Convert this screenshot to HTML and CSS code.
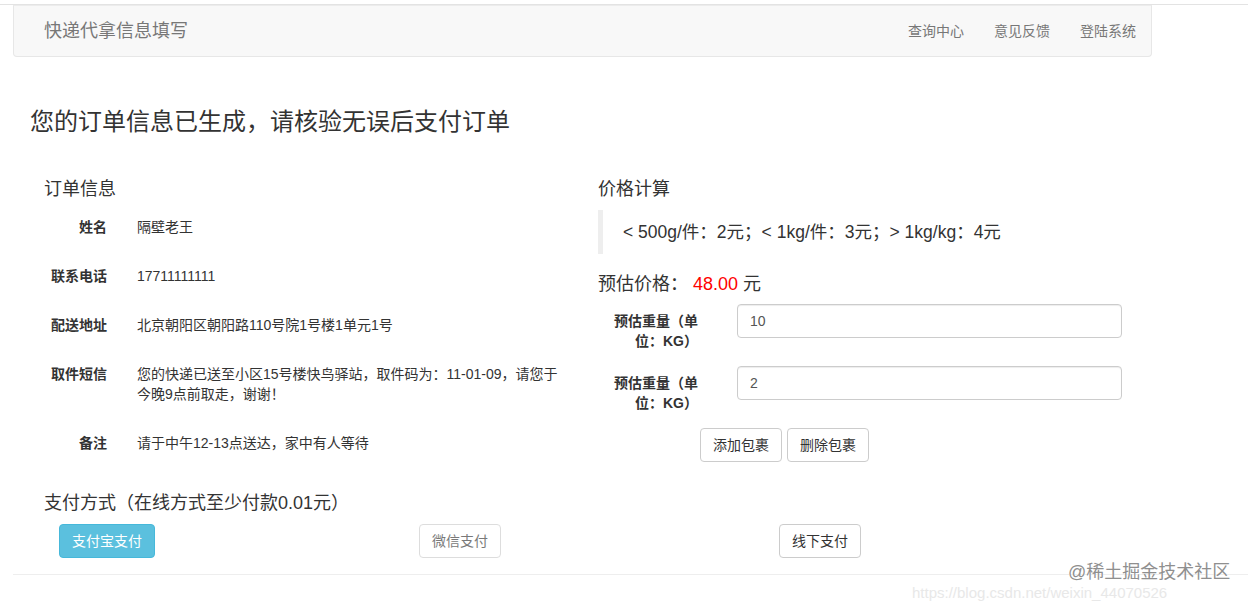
FILE: index.html
```html
<!DOCTYPE html>
<html lang="zh-CN">
<head>
<meta charset="utf-8">
<title>快递代拿信息填写</title>
<link rel="stylesheet" href="styles.css">
</head>
<body>
<div class="topbar"></div>
<nav class="navbar">
  <span class="brand">快递代拿信息填写</span>
  <ul class="nav">
    <li>查询中心</li>
    <li>意见反馈</li>
    <li>登陆系统</li>
  </ul>
</nav>
<main class="page">
  <h3 class="title">您的订单信息已生成，请核验无误后支付订单</h3>
  <div class="cols">
    <section class="col-left">
      <h4 class="sub">订单信息</h4>
      <div class="info-row"><div class="lbl">姓名</div><div class="val">隔壁老王</div></div>
      <div class="info-row"><div class="lbl">联系电话</div><div class="val">17711111111</div></div>
      <div class="info-row"><div class="lbl">配送地址</div><div class="val">北京朝阳区朝阳路110号院1号楼1单元1号</div></div>
      <div class="info-row"><div class="lbl">取件短信</div><div class="val">您的快递已送至小区15号楼快鸟驿站，取件码为：11-01-09，请您于今晚9点前取走，谢谢！</div></div>
      <div class="info-row"><div class="lbl">备注</div><div class="val">请于中午12-13点送达，家中有人等待</div></div>
    </section>
    <section class="col-right">
      <h4 class="sub">价格计算</h4>
      <blockquote class="rule">&lt; 500g/件：2元；&lt; 1kg/件：3元；&gt; 1kg/kg：4元</blockquote>
      <h4 class="sub est">预估价格： <span class="red">48.00</span> 元</h4>
      <div class="w-row"><label class="wlbl">预估重量（单位：KG）</label><input class="input" type="text" value="10"></div>
      <div class="w-row"><label class="wlbl">预估重量（单位：KG）</label><input class="input" type="text" value="2"></div>
      <div class="pkg-btns"><button class="btn">添加包裹</button><button class="btn">删除包裹</button></div>
    </section>
  </div>
  <section class="pay">
    <h4 class="sub">支付方式（在线方式至少付款0.01元）</h4>
    <div class="pay-row">
      <div class="pay-col"><button class="btn btn-info">支付宝支付</button></div>
      <div class="pay-col"><button class="btn btn-disabled">微信支付</button></div>
      <div class="pay-col"><button class="btn">线下支付</button></div>
    </div>
  </section>
  <div class="rule-line"></div>
</main>
<div class="wm-url">https://blog.csdn.net/weixin_44070526</div>
<div class="wm">@稀土掘金技术社区</div>
</body>
</html>
```
FILE: styles.css
```css
* { box-sizing: border-box; }
html, body {
  margin: 0;
  padding: 0;
  background: #fff;
}
body {
  font-family: "Liberation Sans", Arial, "Noto Sans CJK SC", sans-serif;
  font-size: 14px;
  line-height: 20px;
  color: #333;
  width: 1248px;
  height: 602px;
  overflow: hidden;
  position: relative;
}
.topbar {
  height: 5px;
  border-bottom: 1px solid #e3e3e3;
}
.navbar {
  margin: 0 96px 0 13px;
  height: 52px;
  background: #f8f8f8;
  border: 1px solid #e7e7e7;
  border-top-color: #ececec;
  border-radius: 0 0 4px 4px;
  display: flex;
  align-items: center;
  justify-content: space-between;
}
.brand {
  padding-left: 30px;
  font-size: 18px;
  color: #777;
}
.nav {
  list-style: none;
  margin: 0;
  padding: 0;
  display: flex;
}
.nav li {
  padding: 0 15px;
  color: #777;
  font-size: 14px;
}
.page {
  padding-left: 30px;
}
.title {
  margin: 52px 0 44px;
  font-size: 24px;
  line-height: 26px;
  font-weight: normal;
  color: #333;
}
.cols {
  display: flex;
  margin-left: 14px;
}
.col-left { width: 554px; }
.col-right { width: 524px; }
.sub {
  margin: 0 0 11px;
  font-size: 18px;
  line-height: 20px;
  font-weight: normal;
  color: #333;
}
.info-row {
  display: flex;
  margin-bottom: 15px;
}
.lbl {
  width: 63px;
  padding-top: 7px;
  text-align: right;
  font-weight: bold;
}
.val {
  width: 428px;
  margin-left: 30px;
  padding: 7px 0;
  min-height: 34px;
}
.rule {
  margin: 0 0 20px;
  padding: 10px 20px;
  border-left: 5px solid #eee;
  font-size: 17.5px;
  line-height: 24px;
}
.est { margin-bottom: 10px; }
.red { color: #f00; }
.w-row {
  display: flex;
  align-items: flex-start;
  margin-bottom: 15px;
}
.wlbl {
  width: 90px;
  margin-left: 10px;
  padding-top: 7px;
  text-align: right;
  font-weight: bold;
}
.input {
  width: 385px;
  height: 34px;
  margin-left: 39px;
  padding: 6px 12px;
  border: 1px solid #ccc;
  border-radius: 4px;
  box-shadow: inset 0 1px 1px rgba(0,0,0,.075);
  font-family: inherit;
  font-size: 14px;
  color: #555;
}
.pkg-btns {
  display: flex;
  gap: 5px;
  margin-left: 102px;
}
.btn {
  display: inline-block;
  height: 34px;
  padding: 6px 12px;
  font-family: inherit;
  font-size: 14px;
  line-height: 20px;
  color: #333;
  background: #fff;
  border: 1px solid #ccc;
  border-radius: 4px;
}
.btn-info {
  background: #5bc0de;
  border-color: #46b8da;
  color: #fff;
}
.btn-disabled { opacity: .65; }
.pay {
  margin: 18px 0 0 14px;
}
.pay-row { display: flex; }
.pay-col {
  width: 360px;
  padding-left: 15px;
}
.rule-line {
  margin: 16px 0 0 -17px;
  border-top: 1px solid #eee;
}
.wm {
  position: absolute;
  left: 1068px;
  top: 563px;
  font-size: 18px;
  line-height: 18px;
  color: #8f8f8f;
  text-shadow: 0 0 1px #fff, 0 0 1px #fff;
}
.wm-url {
  position: absolute;
  left: 912px;
  top: 586px;
  font-size: 15px;
  line-height: 14px;
  color: #e8e8e8;
}
```
